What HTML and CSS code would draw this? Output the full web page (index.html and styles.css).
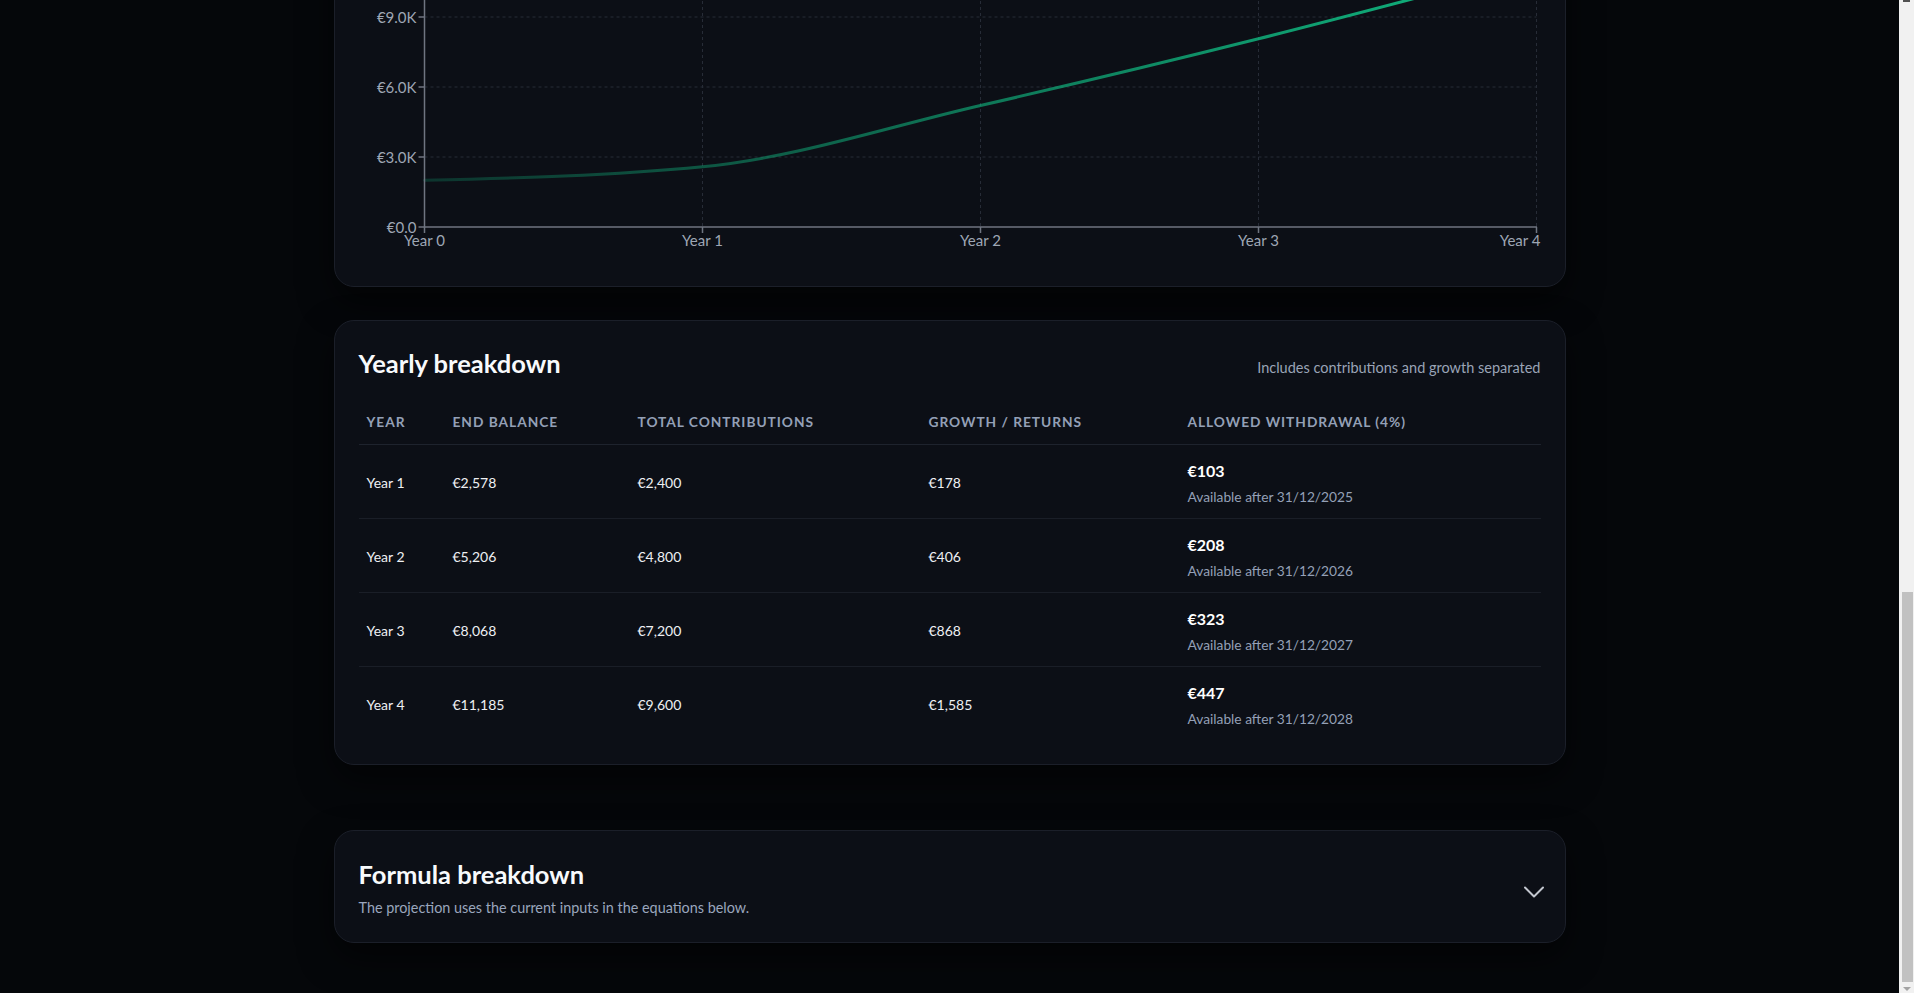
FILE: index.html
```html
<!DOCTYPE html>
<html lang="en">
<head>
<meta charset="utf-8">
<title>Savings projection</title>
<link rel="stylesheet" href="styles.css">
</head>
<body>
<div class="viewport">
  <main class="page">
    <div class="intro">
      <h1 class="intro-title">Savings projection</h1>
    </div>

    <section class="card chart-card">
      <div class="card-head">
        <h2 class="card-title">Growth projection</h2>
      </div>
      <svg class="chart" viewBox="0 0 1181 330" xmlns="http://www.w3.org/2000/svg">
        <defs>
          <linearGradient id="lineGrad" gradientUnits="userSpaceOnUse" x1="65" y1="0" x2="1177" y2="0">
            <stop offset="0" stop-color="#10b981" stop-opacity="0.22"/>
            <stop offset="1" stop-color="#10b981" stop-opacity="1"/>
          </linearGradient>
        </defs>
        <g class="grid">
          <line x1="65" y1="225" x2="1177" y2="225"/>
          <line x1="65" y1="155" x2="1177" y2="155"/>
          <line x1="65" y1="85" x2="1177" y2="85"/>
          <line x1="65" y1="15" x2="1177" y2="15"/>
          <line x1="343" y1="15" x2="343" y2="295"/>
          <line x1="621" y1="15" x2="621" y2="295"/>
          <line x1="899" y1="15" x2="899" y2="295"/>
          <line x1="1177" y1="15" x2="1177" y2="295"/>
        </g>
        <path class="curve" d="M65,248.33 C157.67,246.08 250.33,243.84 343,234.85 C435.67,225.86 528.33,194.88 621,173.53 C713.67,152.18 806.33,130.00 899,106.75 C991.67,83.50 1084.33,58.76 1177,34.02"/>
        <g class="axis">
          <line x1="65" y1="10" x2="65" y2="295.5"/>
          <line x1="64.5" y1="295" x2="1177.5" y2="295"/>
          <line x1="59" y1="295" x2="65" y2="295"/>
          <line x1="59" y1="225" x2="65" y2="225"/>
          <line x1="59" y1="155" x2="65" y2="155"/>
          <line x1="59" y1="85" x2="65" y2="85"/>
          <line x1="59" y1="15" x2="65" y2="15"/>
          <line x1="65" y1="295" x2="65" y2="301"/>
          <line x1="343" y1="295" x2="343" y2="301"/>
          <line x1="621" y1="295" x2="621" y2="301"/>
          <line x1="899" y1="295" x2="899" y2="301"/>
          <line x1="1177" y1="295" x2="1177" y2="301"/>
        </g>
        <g class="ticks-y">
          <text x="57" y="301">€0.0</text>
          <text x="57" y="231">€3.0K</text>
          <text x="57" y="161">€6.0K</text>
          <text x="57" y="91">€9.0K</text>
          <text x="57" y="21">€12.0K</text>
        </g>
        <g class="ticks-x">
          <text x="65" y="314">Year 0</text>
          <text x="343" y="314">Year 1</text>
          <text x="621" y="314">Year 2</text>
          <text x="899" y="314">Year 3</text>
          <text class="last" x="1181" y="314">Year 4</text>
        </g>
      </svg>
    </section>

    <section class="card table-card">
      <div class="card-head">
        <h2 class="card-title">Yearly breakdown</h2>
        <p class="card-note">Includes contributions and growth separated</p>
      </div>
      <table class="breakdown">
        <colgroup>
          <col class="c-year">
          <col class="c-balance">
          <col class="c-contrib">
          <col class="c-growth">
          <col class="c-withdraw">
        </colgroup>
        <thead>
          <tr>
            <th>Year</th>
            <th>End balance</th>
            <th>Total contributions</th>
            <th>Growth / returns</th>
            <th>Allowed withdrawal (4%)</th>
          </tr>
        </thead>
        <tbody>
          <tr>
            <td>Year 1</td>
            <td>€2,578</td>
            <td>€2,400</td>
            <td>€178</td>
            <td><div class="amount">€103</div><div class="avail">Available after 31/12/2025</div></td>
          </tr>
          <tr>
            <td>Year 2</td>
            <td>€5,206</td>
            <td>€4,800</td>
            <td>€406</td>
            <td><div class="amount">€208</div><div class="avail">Available after 31/12/2026</div></td>
          </tr>
          <tr>
            <td>Year 3</td>
            <td>€8,068</td>
            <td>€7,200</td>
            <td>€868</td>
            <td><div class="amount">€323</div><div class="avail">Available after 31/12/2027</div></td>
          </tr>
          <tr>
            <td>Year 4</td>
            <td>€11,185</td>
            <td>€9,600</td>
            <td>€1,585</td>
            <td><div class="amount">€447</div><div class="avail">Available after 31/12/2028</div></td>
          </tr>
        </tbody>
      </table>
    </section>

    <section class="card formula-card">
      <div class="formula-text">
        <h2 class="card-title formula-title">Formula breakdown</h2>
        <p class="formula-sub">The projection uses the current inputs in the equations below.</p>
      </div>
      <svg class="chevron" viewBox="0 0 20 24" xmlns="http://www.w3.org/2000/svg">
        <path d="M1 12.5l9 9 9-9"/>
      </svg>
    </section>
  </main>
</div>
<div class="scrollbar" aria-hidden="true">
  <div class="sb-up"></div>
  <div class="sb-thumb"></div>
  <div class="sb-down"></div>
</div>
</body>
</html>
```

FILE: styles.css
```css
html, body {
  margin: 0;
  height: 100%;
  overflow: hidden;
  background: #05070a;
}

body {
  display: flex;
  font-family: Lato, "Noto Sans", "Liberation Sans", sans-serif;
  color: #e5e7eb;
}

.viewport {
  flex: 1;
  min-width: 0;
  height: 100vh;
  overflow-y: scroll;
  scrollbar-width: none;
  display: flex;
  flex-direction: column-reverse;
}

.viewport::-webkit-scrollbar {
  display: none;
}

/* classic scrollbar as in the screenshot */
.scrollbar {
  flex: none;
  width: 15px;
  height: 100vh;
  background: #f1f1f1;
  display: flex;
  flex-direction: column;
  align-items: center;
}

.sb-up {
  width: 7px;
  height: 2px;
  background: #505050;
}

.sb-thumb {
  width: 11px;
  height: 390px;
  margin-top: 590px;
  margin-left: 2px;
  background: #c1c1c1;
}

.sb-down {
  margin-top: auto;
  margin-bottom: 2px;
  width: 0;
  height: 0;
  border-left: 4px solid transparent;
  border-right: 4px solid transparent;
  border-top: 4px solid #a3a3a3;
}

.page {
  flex: none;
  width: 100%;
  max-width: 1280px;
  box-sizing: border-box;
  margin: 0 auto;
  padding: 0 24px 50px;
}

.intro {
  height: 1303px;
  margin-bottom: 32px;
  padding-top: 40px;
  box-sizing: border-box;
}

.intro-title {
  margin: 0;
  font-size: 32px;
  color: #f8fafc;
}

.card {
  background: #0c0f16;
  border: 1px solid #1b1f29;
  border-radius: 20px;
  padding: 24px;
  box-shadow: 0 14px 34px rgba(0, 0, 0, 0.55);
}

.chart-card {
  margin-bottom: 33px;
}

.table-card {
  margin-bottom: 65px;
}

.card-head {
  display: flex;
  justify-content: space-between;
  align-items: baseline;
}

.card-title {
  margin: 0;
  font-size: 25.5px;
  line-height: 36px;
  font-weight: 700;
  color: #f8fafc;
}

.card-note {
  margin: 0;
  font-size: 14.5px;
  color: #9aa4b6;
}

.chart {
  display: block;
  width: 100%;
  height: 330px;
  margin-top: 20px;
}

.grid line {
  stroke: #272c37;
  stroke-width: 1;
  stroke-dasharray: 3 3;
}

.axis line {
  stroke: #6f7581;
  stroke-width: 1.5;
}

.curve {
  fill: none;
  stroke: url(#lineGrad);
  stroke-width: 3;
  stroke-linecap: round;
}

.ticks-y text,
.ticks-x text {
  font-family: Lato, "Noto Sans", sans-serif;
  font-size: 15px;
  fill: #9ea6b4;
}

.ticks-y text {
  text-anchor: end;
}

.ticks-x text {
  text-anchor: middle;
}

.ticks-x text.last {
  text-anchor: end;
}

.breakdown {
  width: 100%;
  margin-top: 19px;
  table-layout: fixed;
  border-collapse: separate;
  border-spacing: 0;
}

.c-year { width: 86px; }
.c-balance { width: 185px; }
.c-contrib { width: 291px; }
.c-growth { width: 259px; }
.c-withdraw { width: 361px; }

.breakdown th {
  text-align: left;
  font-size: 13.75px;
  line-height: 20px;
  font-weight: 700;
  letter-spacing: 0.07em;
  text-transform: uppercase;
  color: #94a0b6;
  padding: 12px 8px;
  border-bottom: 1px solid #1e232d;
}

.breakdown td {
  font-size: 14px;
  line-height: 20px;
  color: #eef0f3;
  padding: 14px 8px 11px;
  vertical-align: middle;
  border-bottom: 1px solid #1a1e27;
}

.breakdown tbody tr:last-child td {
  border-bottom: none;
}

.amount {
  font-size: 16px;
  line-height: 24px;
  font-weight: 700;
  color: #ffffff;
}

.avail {
  margin-top: 4px;
  font-size: 13.75px;
  line-height: 20px;
  color: #94a0b6;
}

.formula-card {
  display: flex;
  align-items: center;
  justify-content: space-between;
}

.formula-title {
  line-height: 35px;
  padding-top: 2px;
}

.formula-sub {
  margin: 6px 0 0;
  font-size: 14.4px;
  line-height: 20px;
  color: #9aa6bd;
}

.chevron {
  flex: none;
  width: 20px;
  height: 24px;
  margin-right: -3px;
  fill: none;
  stroke: #c3c7cf;
  stroke-width: 2;
  stroke-linecap: round;
  stroke-linejoin: round;
}
```
